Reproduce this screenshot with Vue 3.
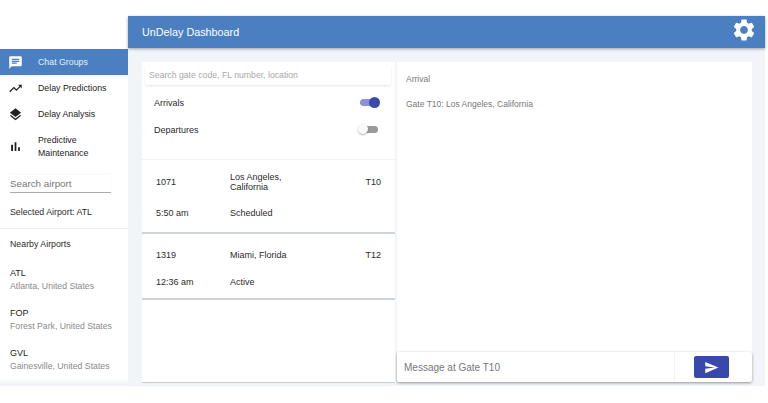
<script setup>
const nav = [
  { label: 'Chat Groups', icon: 'chat', active: true },
  { label: 'Delay Predictions', icon: 'trend' },
  { label: 'Delay Analysis', icon: 'layers' },
  { label: 'Predictive Maintenance', icon: 'bars', tall: true }
]
const icons = {
  chat: 'M20 2H4c-1.1 0-2 .9-2 2v18l4-4h14c1.1 0 2-.9 2-2V4c0-1.100-.9-2-2-2zM6 9h12v2H6V9zm8 5H6v-2h8v2zm4-6H6V6h12v2z',
  trend: 'M16 6l2.290 2.290-4.880 4.880-4-4L2 16.590 3.410 18l6-6 4 4 6.300-6.290L22 12V6z',
  layers: 'M11.990 18.540l-7.370-5.730L3 14.070l9 7 9-7-1.630-1.270-7.380 5.740zM12 16l7.360-5.730L21 9l-9-7-9 7 1.630 1.270L12 16z',
  bars: 'M5 9.200h3V19H5zM10.600 5h2.800v14h-2.800zm5.600 8H19v6h-2.800z'
}
const airports = [
  { code: 'ATL', place: 'Atlanta, United States' },
  { code: 'FOP', place: 'Forest Park, United States' },
  { code: 'GVL', place: 'Gainesville, United States' }
]
</script>

<template>
  <div class="page">
    <aside class="side">
      <nav class="nav">
        <div v-for="n in nav" :key="n.label" class="nav-item" :class="{ active: n.active, tall: n.tall }">
          <svg class="nav-icon" viewBox="0 0 24 24"><path :d="icons[n.icon]" fill="currentColor" /></svg>
          <span class="nav-label" :class="{ wrap: n.tall }">{{ n.label }}</span>
        </div>
      </nav>
      <div class="air-search">Search airport</div>
      <div class="selected">Selected Airport: ATL</div>
      <div class="nearby">Nearby Airports</div>
      <div v-for="a in airports" :key="a.code" class="airport">
        <div class="code">{{ a.code }}</div>
        <div class="place">{{ a.place }}</div>
      </div>
    </aside>
    <div class="main">
      <header class="bar">
        <span class="title">UnDelay Dashboard</span>
        <svg class="gear" viewBox="0 0 24 24"><path fill="#fff" d="M19.140 12.940c.04-.3.060-.61.060-.94 0-.32-.02-.64-.07-.94l2.030-1.580c.18-.14.230-.41.120-.61l-1.920-3.320c-.12-.22-.37-.29-.59-.22l-2.390.96c-.5-.38-1.030-.7-1.620-.94l-.36-2.540c-.04-.24-.24-.41-.48-.41h-3.840c-.24 0-.43.170-.47.410l-.36 2.540c-.59.240-1.130.570-1.620.94l-2.390-.96c-.22-.08-.47 0-.59.220L2.740 8.870c-.12.210-.08.470.12.610l2.030 1.580c-.05.3-.09.630-.09.940s.02.640.07.940l-2.030 1.580c-.18.140-.23.410-.12.610l1.920 3.320c.12.220.37.290.59.220l2.390-.96c.5.380 1.030.7 1.620.94l.36 2.540c.05.240.24.410.48.410h3.840c.24 0 .44-.17.47-.41l.36-2.540c.59-.24 1.130-.56 1.620-.94l2.390.96c.22.080.47 0 .59-.22l1.920-3.320c.12-.22.070-.47-.12-.61l-2.010-1.580zM12 15.600c-1.980 0-3.600-1.620-3.600-3.600s1.620-3.600 3.600-3.600 3.600 1.620 3.600 3.600-1.620 3.600-3.600 3.600z" /></svg>
      </header>
      <div class="content">
        <section class="left">
          <div class="gate-search">Search gate code, FL number, location</div>
          <div class="toggle-row">
            <span>Arrivals</span>
            <span class="switch on"><i></i></span>
          </div>
          <div class="toggle-row">
            <span>Departures</span>
            <span class="switch"><i></i></span>
          </div>
          <div class="flight first">
            <div class="row r1">
              <span class="c1">1071</span>
              <span class="c2">Los Angeles, California</span>
              <span class="c3">T10</span>
            </div>
            <div class="row r2">
              <span class="c1">5:50 am</span>
              <span class="c2">Scheduled</span>
            </div>
          </div>
          <div class="flight second">
            <div class="row r3">
              <span class="c1">1319</span>
              <span class="c2">Miami, Florida</span>
              <span class="c3">T12</span>
            </div>
            <div class="row r4">
              <span class="c1">12:36 am</span>
              <span class="c2">Active</span>
            </div>
          </div>
        </section>
        <section class="right">
          <div class="chat">
            <div class="muted arr">Arrival</div>
            <div class="muted">Gate T10: Los Angeles, California</div>
          </div>
          <div class="composer">
            <span class="msg">Message at Gate T10</span>
            <div class="send-wrap">
              <button class="send">
                <svg viewBox="0 0 24 24" width="15" height="15"><path fill="#fff" d="M2.010 21L23 12 2.010 3 2 10l15 2-15 2z" /></svg>
              </button>
            </div>
          </div>
        </section>
      </div>
    </div>
  </div>
</template>

<style>
html, body { margin: 0; background: #fff; }
</style>

<style scoped>
.page {
  width: 768px;
  height: 403px;
  box-sizing: border-box;
  padding: 16px 3px 17px 0;
  display: flex;
  font-family: "Liberation Sans", Arial, sans-serif;
  color: #2b2b2b;
  overflow: hidden;
  background: #fff;
}
.side {
  width: 128px;
  flex: none;
  box-sizing: border-box;
  padding-top: 33px;
  font-size: 8.800px;
  overflow: hidden;
  background: linear-gradient(to bottom, #fff calc(100% - 8px), #eef0f3);
}
.nav-item {
  height: 26px;
  display: flex;
  align-items: center;
  color: #222;
}
.nav-item.tall { height: 39px; }
.nav-item.active { background: #4a80c2; color: #fff; }
.nav-icon { width: 15px; height: 15px; margin-left: 8px; flex: none; }
.nav-label { margin-left: 15px; line-height: 13px; white-space: nowrap; }
.nav-label.wrap { white-space: normal; width: 60px; }
.nav-item.active .nav-label { color: #e8f0fa; }
.air-search {
  margin: 9px 0 0 10px;
  width: 101px;
  height: 18px;
  box-sizing: border-box;
  border-bottom: 1px solid #aaa;
  font-size: 9.800px;
  line-height: 17px;
  color: #777;
  box-shadow: 0 -1px 3px rgba(0, 0, 0, 0.04);
}
.selected {
  margin: 13px 0 0 0;
  padding: 0 0 10px 10px;
  border-bottom: 1px solid #e9ecef;
  line-height: 12px;
}
.nearby { padding: 9px 0 0 10px; line-height: 12px; }
.airport { padding: 0 0 0 10px; margin-top: 17px; line-height: 13px; }
.airport + .airport { margin-top: 14px; }
.code { font-size: 9px; color: #222; }
.place { font-size: 8.700px; color: #8a8a8a; }
.main {
  flex: 1;
  display: flex;
  flex-direction: column;
  background: #f1f4f9;
  min-width: 0;
}
.bar {
  height: 32px;
  flex: none;
  background: #4a80c2;
  color: #fff;
  display: flex;
  align-items: center;
  justify-content: space-between;
  padding: 0 8px 0 14px;
  box-shadow: 0 1px 3px rgba(0, 0, 0, 0.35);
  position: relative;
  font-size: 10.800px;
}
.gear { width: 26px; height: 26px; margin-top: -5px; }
.content {
  flex: 1;
  display: flex;
  gap: 2px;
  padding: 14px 13px 4px 14px;
  min-height: 0;
}
.left {
  width: 253px;
  flex: none;
  background: #fff;
  box-sizing: border-box;
  padding-top: 4px;
  font-size: 9px;
  box-shadow: 0 1px 0 #c9ccd0;
}
.gate-search {
  height: 19px;
  margin: 0 4px 4px 3px;
  padding-left: 4px;
  font-size: 8.700px;
  line-height: 18px;
  color: #a8a8a8;
  box-shadow: 0 1px 2px rgba(0, 0, 0, 0.1);
}
.toggle-row {
  height: 27px;
  display: flex;
  align-items: center;
  justify-content: space-between;
  padding: 0 17px 0 12px;
}
.switch {
  position: relative;
  width: 18px;
  height: 7px;
  border-radius: 4px;
  background: #999;
}
.switch i {
  position: absolute;
  top: -2px;
  left: -2px;
  width: 10px;
  height: 10px;
  border-radius: 50%;
  background: #fafafa;
  box-shadow: 0 1px 2px rgba(0, 0, 0, 0.3);
}
.switch.on { background: #8a93d8; }
.switch.on i { left: 9px; top: -2.500px; width: 11px; height: 11px; background: #3949ab; box-shadow: none; }
.flight { padding: 0 2px 0 14px; box-sizing: border-box; border-bottom: 2px solid #cfd2d6; }
.first {
  margin-top: 16px;
  border-top: 1px solid #f2f3f5;
  height: 75px;
}
.second { height: 66px; }
.row { display: flex; align-items: center; line-height: 10px; }
.r1 { height: 43px; }
.r2 { height: 19px; }
.r3 { height: 42px; }
.r4 { height: 12px; }
.c1 { width: 74px; flex: none; }
.c2 { width: 68px; flex: none; }
.c3 { margin-left: auto; padding-right: 12px; }
.right {
  flex: 1;
  background: #fff;
  display: flex;
  flex-direction: column;
  min-width: 0;
}
.chat { flex: 1; padding: 12px 9px; }
.muted { font-size: 8.500px; color: #777; line-height: 10px; }
.arr { margin-bottom: 15px; }
.composer {
  height: 30px;
  flex: none;
  display: flex;
  align-items: center;
  border-radius: 2px;
  box-shadow: 0 1px 3px rgba(0, 0, 0, 0.4);
  background: #fff;
}
.msg { flex: 1; padding-left: 7px; font-size: 10px; color: #777; }
.send-wrap {
  width: 78px;
  height: 100%;
  display: flex;
  align-items: center;
  border-left: 1px solid #f2f2f2;
  box-sizing: border-box;
  padding-left: 19px;
}
.send {
  width: 35px;
  height: 22px;
  border: 0;
  padding: 0;
  border-radius: 2px;
  background: #3949ab;
  display: flex;
  align-items: center;
  justify-content: center;
}
</style>
